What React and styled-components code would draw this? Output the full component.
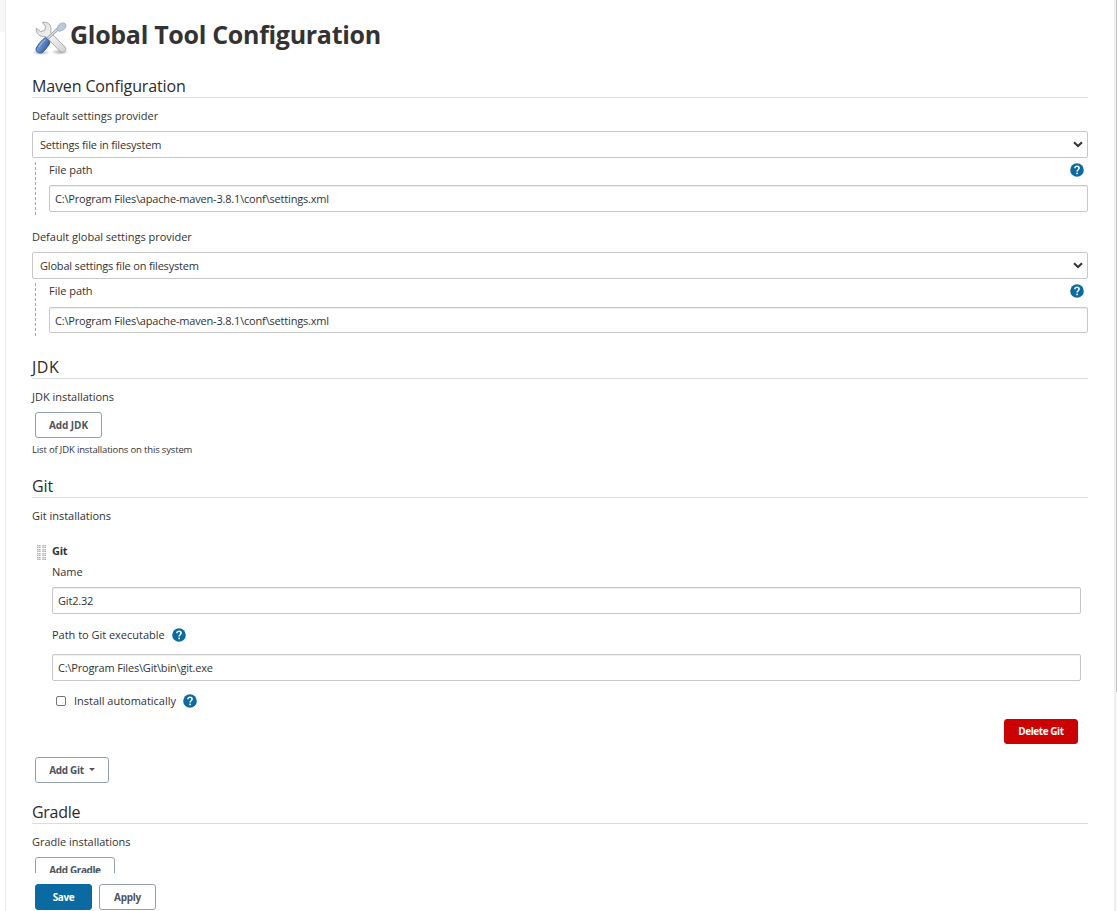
import React from "react";
import styled, { createGlobalStyle } from "styled-components";

const GlobalStyle = createGlobalStyle`
  * { box-sizing: border-box; }
  body {
    margin: 0;
    background: #fff;
    color: #333;
    font-family: "Open Sans", "Noto Sans", sans-serif;
    overflow: hidden;
  }
`;

const Page = styled.div`
  display: flex;
  width: 1117px;
  height: 911px;
  overflow: hidden;
`;

const SidePanel = styled.aside`
  flex: none;
  width: 6px;
  border-right: 1px solid #ececec;
  background: linear-gradient(#f8f8f8, #f8f8f8) 0 0 / 100% 32px no-repeat;
`;

const MainColumn = styled.div`
  flex: 1;
  min-width: 0;
  display: flex;
  flex-direction: column;
`;

const Content = styled.main`
  height: 873px;
  padding: 17px 26px 0;
  overflow: hidden;
`;

const ScrollTrack = styled.div`
  flex: none;
  width: 3px;
  padding-left: 2px;
  background: #f1f1f1;
`;

const ScrollThumb = styled.div`
  height: 692px;
  background: #c1c1c1;
`;

const Header = styled.header`
  display: flex;
  height: 57px;
`;

const PageTitle = styled.h1`
  margin: 0 0 0 2px;
  font-size: 25px;
  font-weight: 700;
  line-height: 34px;
  letter-spacing: -0.3px;
  white-space: nowrap;
`;

const Section = styled.section`
  height: ${(p) => p.$height}px;
`;

const SectionTitle = styled.h2`
  height: 24px;
  margin: 0 0 8px;
  border-bottom: 1px solid #dcdcdc;
  color: #2b2b2b;
  font-size: 16px;
  font-weight: 500;
  line-height: 25px;
  letter-spacing: ${(p) => p.$tracking ?? -0.14}px;
`;

const Label = styled.div`
  display: flex;
  align-items: center;
  height: ${(p) => (p.$strong ? 21 : 20)}px;
  padding-bottom: ${(p) => (p.$strong ? 3 : 2)}px;
  font-size: 11px;
  font-weight: ${(p) => (p.$strong ? 700 : 500)};
  letter-spacing: ${(p) => (p.$strong ? -0.3 : -0.02)}px;
  white-space: nowrap;
`;

const Field = styled.div`
  display: flex;
  align-items: center;
  justify-content: space-between;
  height: ${(p) => p.$height ?? 27}px;
  padding: 0 5px;
  border: 1px solid #c8c8c8;
  border-radius: 2px;
  box-shadow: inset 0 1px 1px rgba(0, 0, 0, 0.07);
  font-size: 11px;
  letter-spacing: -0.18px;
  white-space: nowrap;
`;

const SelectField = styled(Field)`
  margin-top: 5px;
  padding: 0 4px 0 7px;
  box-shadow: none;
`;

const Nested = styled.div`
  display: flex;
  height: ${(p) => p.$height}px;
  margin: 4px 0 0 3px;
`;

const DashedRule = styled.div`
  flex: none;
  width: 1px;
  margin-right: 13px;
  background: repeating-linear-gradient(#a8a8a8 0 3px, transparent 3px 5px);
`;

const NestedBody = styled.div`
  flex: 1;
`;

const NestedLabel = styled(Label)`
  justify-content: space-between;
  height: 16px;
  margin-bottom: ${(p) => p.$gap}px;
  padding-right: 4px;
`;

const ProviderGroup = styled.div`
  height: 121px;
`;

const Button = styled.button`
  display: inline-flex;
  align-items: center;
  justify-content: center;
  width: ${(p) => p.$width}px;
  height: 26px;
  margin: 0;
  padding: 0;
  border: 1px solid #94a1ab;
  border-radius: 3px;
  background: #fff;
  color: #4d545d;
  font: 700 10px "Open Sans", "Noto Sans", sans-serif;
  letter-spacing: ${(p) => p.$tracking ?? -0.4}px;
  white-space: nowrap;
`;

const PrimaryButton = styled(Button)`
  border-color: #0b6aa2;
  background: #0b6aa2;
  color: #fff;
`;

const DangerButton = styled(Button)`
  height: 25px;
  padding-bottom: 1px;
  border-color: #cc0003;
  background: #cc0003;
  color: #fff;
`;

const AddRow = styled.div`
  display: flex;
  height: 26px;
  margin: 5px 0 0 3px;
`;

const Description = styled.div`
  margin-top: 3px;
  font-size: 9.5px;
  line-height: 17px;
  letter-spacing: -0.16px;
`;

const Installation = styled.div`
  display: flex;
  height: 211px;
  margin: 15px 7px 0 5px;
`;

const InstallationBody = styled.div`
  flex: 1;
`;

const Grip = styled.div`
  flex: none;
  width: 9px;
  height: 16px;
  margin: 4px 6px 0 0;
  background:
    linear-gradient(90deg, transparent 4px, #fff 4px 5px, transparent 5px),
    repeating-linear-gradient(transparent 0 3px, #fff 3px 4px),
    repeating-linear-gradient(transparent 0 1px, rgba(255, 255, 255, 0.5) 1px 2px),
    repeating-linear-gradient(90deg, #b9b7b5 0 1px, #cfcdcb 1px 2px);
`;

const NameField = styled(Field)`
  margin: 5px 0 11px;
`;

const PathField = styled(Field)`
  margin: 9px 0 10px;
`;

const InlineLabel = styled(Label)`
  gap: 7px;
`;

const Checkbox = styled.span`
  width: 10px;
  height: 10px;
  margin: 2px 1px 0 4px;
  border: 1px solid #767676;
  border-radius: 2px;
`;

const DeleteRow = styled.div`
  display: flex;
  justify-content: flex-end;
  padding: 8px 3px 0 0;
`;

const MenuCaret = styled.span`
  margin: -1px 0 0 5px;
  border: 3px solid transparent;
  border-top-color: currentColor;
  border-bottom: 0;
`;

const BottomBar = styled.footer`
  display: flex;
  gap: 7px;
  height: 38px;
  padding: 11px 29px 0;
  background: #fff;
`;

const Svg = styled.svg`
  flex: none;
  display: block;
`;

const HelpSvg = styled(Svg)`
  margin-top: 2px;
`;

function HelpIcon() {
  return (
    <HelpSvg width="14" height="14" viewBox="0 0 14 14" aria-label="Help">
      <circle cx="7" cy="7" r="6.8" fill="#0b6aa2" />
      <path
        d="M4.9 5.2C4.9 3.9 5.8 3.3 7 3.3s2.1.7 2.1 1.8c0 .9-.5 1.3-1.1 1.8-.6.4-.9.7-.9 1.6"
        fill="none"
        stroke="#fff"
        strokeWidth="1.5"
      />
      <rect x="6.3" y="9.6" width="1.6" height="1.6" fill="#fff" />
    </HelpSvg>
  );
}

function ChevronIcon() {
  return (
    <Svg width="10" height="7" viewBox="0 0 10 7">
      <path d="M1 1.2 5 5l4-3.8" fill="none" stroke="#333" strokeWidth="2" />
    </Svg>
  );
}

function ToolsIcon() {
  return (
    <Svg width="36" height="40" viewBox="0 0 36 40">
      <defs>
        <linearGradient id="metal" x1="0" y1="0" x2="1" y2="1">
          <stop offset="0" stopColor="#d9d9d7" />
          <stop offset="0.5" stopColor="#f3f3f2" />
          <stop offset="1" stopColor="#cfcfcd" />
        </linearGradient>
        <linearGradient id="handle" x1="0" y1="0" x2="1" y2="0.6">
          <stop offset="0" stopColor="#3465a4" />
          <stop offset="0.4" stopColor="#6f99d0" />
          <stop offset="1" stopColor="#2b5797" />
        </linearGradient>
        <radialGradient id="shade">
          <stop offset="0" stopColor="#000" stopOpacity="0.32" />
          <stop offset="1" stopColor="#000" stopOpacity="0" />
        </radialGradient>
      </defs>
      <ellipse cx="9" cy="35.5" rx="9" ry="3" fill="url(#shade)" />
      <ellipse cx="28" cy="35" rx="9" ry="3" fill="url(#shade)" />
      <path
        d="M10.500 5.500C15 4 19.500 7.500 19 13l-.3 2.600 14.200 14.200c3 3.600-2 7.500-5 4.400L13.700 19.500C8.500 20.500 3.500 17 4.300 11.300l4.400 3.300 4-1.300.9-3.900z"
        fill="url(#metal)"
        stroke="#a0a19e"
        strokeWidth="0.9"
      />
      <path d="M15.500 21.500 27.500 10.500" stroke="#8d949d" strokeWidth="2.800" />
      <path d="M15.500 21.500 27.500 10.500" stroke="#dce3ea" strokeWidth="1.300" />
      <path
        d="M25.700 10.200c.2-2.700 2.600-4 6.300-4.300l2 1.700c0 3.200-1.400 5.200-4.100 5.700l-2.600 1.200-2.600-2.400z"
        fill="#bccad8"
        stroke="#93a3b4"
        strokeWidth="0.8"
      />
      <path
        d="m13.500 20.500 4.500 4.200c-.3 3.300-3.400 6.200-6.500 9.800-2.600 3.100-8.800.8-7.300-3.300 1.200-2.300 5-8.200 9.300-10.700z"
        fill="url(#handle)"
        stroke="#2a5593"
        strokeWidth="0.9"
      />
      <path d="M7 30c1.700-2.800 4-5.600 6.500-7.300" fill="none" stroke="#a5c2e6" strokeWidth="1" />
    </Svg>
  );
}

function Provider({ label, value, nestedHeight, gap, inputHeight }) {
  return (
    <ProviderGroup>
      <Label>{label}</Label>
      <SelectField>
        {value}
        <ChevronIcon />
      </SelectField>
      <Nested $height={nestedHeight}>
        <DashedRule />
        <NestedBody>
          <NestedLabel $gap={gap}>
            File path
            <HelpIcon />
          </NestedLabel>
          <Field $height={inputHeight}>
            {"C:\\Program Files\\apache-maven-3.8.1\\conf\\settings.xml"}
          </Field>
        </NestedBody>
      </Nested>
    </ProviderGroup>
  );
}

export default function App() {
  return (
    <Page>
      <GlobalStyle />
      <SidePanel />
      <MainColumn>
        <Content>
          <Header>
            <ToolsIcon />
            <PageTitle>Global Tool Configuration</PageTitle>
          </Header>

          <Section $height={281}>
            <SectionTitle>Maven Configuration</SectionTitle>
            <Provider
              label="Default settings provider"
              value="Settings file in filesystem"
              nestedHeight={54}
              gap={7}
            />
            <Provider
              label="Default global settings provider"
              value="Global settings file on filesystem"
              nestedHeight={55}
              gap={8}
              inputHeight={26}
            />
          </Section>

          <Section $height={119}>
            <SectionTitle $tracking={0.5}>JDK</SectionTitle>
            <Label>JDK installations</Label>
            <AddRow>
              <Button $width={67} $tracking={-0.05}>Add JDK</Button>
            </AddRow>
            <Description>List of JDK installations on this system</Description>
          </Section>

          <Section $height={326}>
            <SectionTitle>Git</SectionTitle>
            <Label>Git installations</Label>
            <Installation>
              <Grip />
              <InstallationBody>
                <Label $strong>Git</Label>
                <Label>Name</Label>
                <NameField>Git2.32</NameField>
                <InlineLabel>
                  Path to Git executable
                  <HelpIcon />
                </InlineLabel>
                <PathField>{"C:\\Program Files\\Git\\bin\\git.exe"}</PathField>
                <InlineLabel>
                  <Checkbox />
                  Install automatically
                  <HelpIcon />
                </InlineLabel>
                <DeleteRow>
                  <DangerButton $width={74} $tracking={-0.45}>Delete Git</DangerButton>
                </DeleteRow>
              </InstallationBody>
            </Installation>
            <AddRow>
              <Button $width={74} $tracking={-0.3}>
                Add Git
                <MenuCaret />
              </Button>
            </AddRow>
          </Section>

          <Section $height={119}>
            <SectionTitle $tracking={-0.3}>Gradle</SectionTitle>
            <Label>Gradle installations</Label>
            <AddRow>
              <Button $width={80}>Add Gradle</Button>
            </AddRow>
          </Section>
        </Content>
        <BottomBar>
          <PrimaryButton $width={57}>Save</PrimaryButton>
          <Button $width={57} $tracking={-0.3}>Apply</Button>
        </BottomBar>
      </MainColumn>
      <ScrollTrack>
        <ScrollThumb />
      </ScrollTrack>
    </Page>
  );
}
